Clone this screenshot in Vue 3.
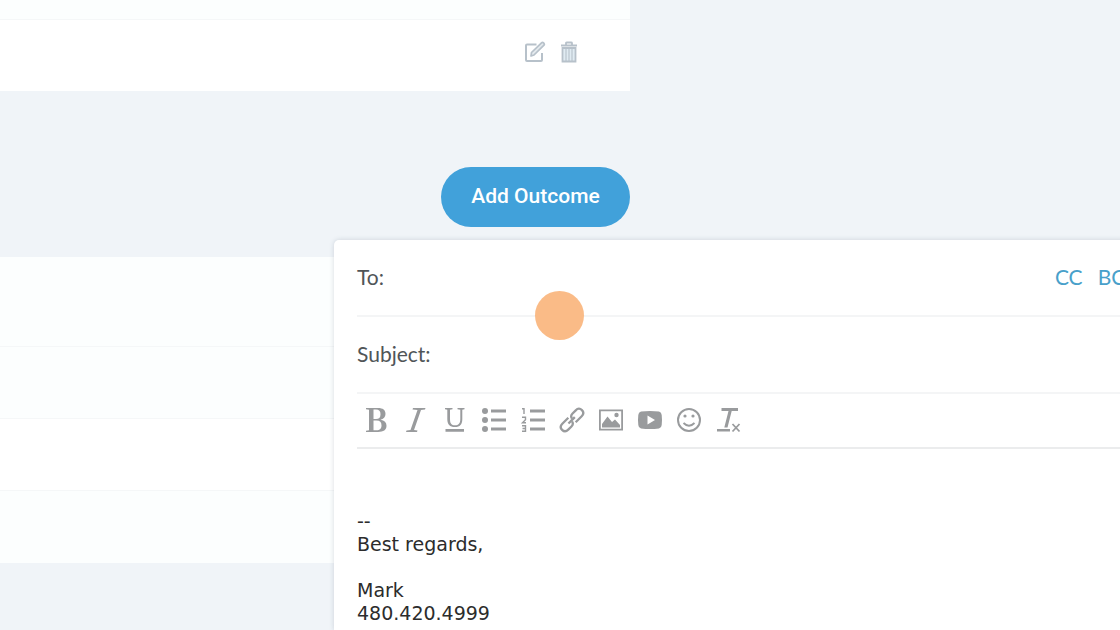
<script setup>
import { ref } from 'vue'

const to = ref('')
const subject = ref('')
const message = ref('--\nBest regards,\n\nMark\n480.420.4999')
const rows = ['tall', 'tinted', 'plain', 'tinted']
</script>

<template>
  <main class="page">
    <div class="column">
      <section class="card">
        <div class="row stub tinted"></div>
        <div class="row actions">
          <button class="icon-btn" type="button" aria-label="Edit">
            <svg width="22" height="22" viewBox="0 0 22 22" fill="none" stroke="#b7c1ca" stroke-width="2">
              <path d="M12.500 3.500H3Q2 3.500 2 4.500V19Q2 20 3 20H17Q18 20 18 19V12" />
              <path d="M7 15L7.500 11.500L17.500 1.800Q18.500 .9 19.700 2Q20.800 3.200 20 4.200L10 14Z" fill="#e3e9ed" stroke-width="1.700" stroke-linejoin="round" />
            </svg>
          </button>
          <button class="icon-btn" type="button" aria-label="Delete">
            <svg width="18" height="22" viewBox="0 0 18 22" fill="none" stroke="#b7c1ca">
              <path d="M1 4.500H17M6 4V2Q6 1.500 7 1.500H11Q12 1.500 12 2V4" stroke-width="1.800" />
              <path d="M2.500 7H15.500V20.500H2.500Z" fill="#e0ebf2" stroke-width="1.800" />
              <path d="M6 8V20M9 8V20M12 8V20" stroke-width="1.100" />
            </svg>
          </button>
        </div>
      </section>
      <button class="add" type="button">Add Outcome</button>
      <section class="card">
        <div v-for="(kind, i) in rows" :key="i" class="row" :class="kind"></div>
      </section>
    </div>

    <form class="composer" @submit.prevent>
      <div class="field">
        <label for="to">To:</label>
        <input id="to" v-model="to" type="text" />
        <a href="#">CC</a>
        <a href="#">BCC</a>
      </div>
      <div class="field">
        <label for="subject">Subject:</label>
        <input id="subject" v-model="subject" type="text" />
      </div>
      <div class="toolbar">
        <button type="button" aria-label="Bold">
          <svg viewBox="0 0 26 26"><path fill-rule="evenodd" d="M2 1H14C19 1 21.500 3 21.500 7C21.500 10 19.500 12 16.500 12.700C20.500 13.300 22.500 15.500 22.500 18.800C22.500 23 19.500 25 14 25H2V23.800L5 23.300V2.700L2 2.200ZM9.500 2.500V12H12C15 12 16.500 10.500 16.500 7.200C16.500 4 15 2.500 12 2.500ZM9.500 13.600V23.300H12.500C16 23.300 17.500 21.500 17.500 18.500C17.500 15.300 16 13.600 12.500 13.600Z" /></svg>
        </button>
        <button type="button" aria-label="Italic">
          <svg viewBox="0 0 26 26"><path d="M10 1H22.500L22 2.500L18 3L11 23L14.500 23.500L14 25H3L3.500 23.500L7.500 23L14.500 3L9.500 2.500Z" /></svg>
        </button>
        <button type="button" aria-label="Underline">
          <svg viewBox="0 0 26 26"><path d="M3 1H10.500V2.200L8 2.700V12C8 16.500 9.500 18.300 13 18.300C16.500 18.300 18.300 16.500 18.300 12V2.700L15.500 2.200V1H22.500V2.200L20.300 2.700V12C20.300 17.500 18 20 13 20C7.700 20 5.300 17.500 5.300 12V2.700L3 2.200ZM3.500 22H22V24.800H3.500Z" /></svg>
        </button>
        <button type="button" aria-label="Bulleted list">
          <svg viewBox="0 0 26 26"><circle cx="4" cy="4" r="3" /><circle cx="4" cy="13" r="3" /><circle cx="4" cy="22" r="3" /><path d="M10 2.500H25V5.500H10ZM10 11.500H25V14.500H10ZM10 20.500H25V23.500H10Z" /></svg>
        </button>
        <button type="button" aria-label="Numbered list">
          <svg viewBox="0 0 26 26"><path d="M10 2.500H25V5.500H10ZM10 11.500H25V14.500H10ZM10 20.500H25V23.500H10Z" /><path class="line" stroke-width="1.400" d="M2 1.700H4V7M2 10.200H5.500V12.800L2.500 15.700H6M2 18.700H5.500V24.300H2M2.500 21.500H5.500" /></svg>
        </button>
        <button type="button" aria-label="Link">
          <svg viewBox="0 0 26 26"><g class="line" stroke-width="2.300" transform="rotate(-45 13 13)"><path d="M12 8.800H3.500Q-1 8.800 -1 13T3.500 17.200H8Q11.500 17.200 12 14" /><path d="M14 17.200H22.500Q27 17.200 27 13T22.500 8.800H18Q14.500 8.800 14 12" /><path d="M8 13H17" /></g></svg>
        </button>
        <button type="button" aria-label="Image">
          <svg viewBox="0 0 26 26"><path class="line" stroke-width="1.800" d="M1.900 3.400H24.100V22.600H1.900Z" /><circle cx="18.500" cy="8" r="2.200" /><path d="M4 20.500V17L9.500 9.500L14 15L17 12.500L22 18V20.500Z" /></svg>
        </button>
        <button type="button" aria-label="Video">
          <svg viewBox="0 0 26 26"><path fill-rule="evenodd" d="M4 4.500Q13 3.500 22 4.500Q24.500 5 24.700 8Q25.300 13 24.700 18Q24.500 21 22 21.500Q13 22.500 4 21.500Q1.500 21 1.300 18Q.7 13 1.300 8Q1.500 5 4 4.500ZM10.500 8.500V17.500L18 13Z" /></svg>
        </button>
        <button type="button" aria-label="Emoji">
          <svg viewBox="0 0 26 26"><circle class="line" cx="13" cy="13" r="11" stroke-width="2" /><circle cx="9" cy="9" r="1.600" /><circle cx="17" cy="9" r="1.600" /><path class="line" stroke-width="1.800" d="M7.500 16Q13 21.500 18.500 16" /></svg>
        </button>
        <button type="button" aria-label="Clear formatting">
          <svg viewBox="0 0 26 26"><path d="M6.500 1H23V4H16.700L12.500 20.500H9.300L13.500 4H6.500ZM2 22H15V24.500H2Z" /><path class="line" stroke-width="1.800" d="M17.500 17L24.500 24.500M24.500 17L17.500 24.500" /></svg>
        </button>
      </div>
      <textarea v-model="message" aria-label="Message" spellcheck="false"></textarea>
    </form>

    <span class="pointer"></span>
  </main>
</template>

<style>
body {
  margin: 0;
}
</style>

<style scoped>
.page {
  position: relative;
  min-height: 100vh;
  overflow: hidden;
  background: #f0f4f8;
  font-family: Lato, "Liberation Sans", sans-serif;
  color: #505558;
}
* {
  box-sizing: border-box;
}
button {
  padding: 0;
  border: 0;
  background: none;
  cursor: pointer;
}
.column {
  display: flex;
  flex-direction: column;
  width: 56.25%;
}
.row {
  height: 72px;
  background: #fff;
  border-bottom: 1px solid #f5f7f8;
}
.row:last-child {
  border-bottom: 0;
}
.tinted,
.tall {
  background: #fcfefe;
}
.tall {
  height: 90px;
}
.stub {
  height: 20px;
}
.actions {
  display: flex;
  align-items: center;
  justify-content: flex-end;
  gap: 14px;
  height: 71px;
  padding: 0 52px 8px 0;
}
.icon-btn svg {
  display: block;
}
.add {
  align-self: flex-end;
  width: 189px;
  height: 60px;
  margin: 76px 0 30px;
  padding-bottom: 2px;
  border-radius: 30px;
  background: #41a1da;
  color: #fff;
  font: 500 21px Roboto, sans-serif;
}
.composer {
  position: absolute;
  top: 240px;
  bottom: 0;
  left: 334px;
  right: -42px;
  display: flex;
  flex-direction: column;
  padding: 0 23px;
  border-radius: 5px 5px 0 0;
  background: #fff;
  box-shadow: 0 0 5px rgba(60, 80, 100, 0.2);
}
.field {
  display: flex;
  align-items: center;
  gap: 15px;
  height: 77px;
  padding-bottom: 3px;
  border-bottom: 2px solid #f4f5f6;
  font-size: 21px;
}
.field input {
  flex: 1;
  min-width: 0;
  border: 0;
  outline: 0;
  background: none;
  font: inherit;
}
.field a {
  color: #48a0ca;
  text-decoration: none;
}
.toolbar {
  display: flex;
  align-items: center;
  gap: 13px;
  height: 55px;
  padding: 0 0 2px 7px;
  border-bottom: 2px solid #ebeced;
}
.toolbar svg {
  display: block;
  width: 26px;
  height: 26px;
  fill: #999b9d;
}
.toolbar .line {
  fill: none;
  stroke: #999b9d;
}
textarea {
  flex: 1;
  min-height: 180px;
  padding: 61px 0 0;
  border: 0;
  outline: 0;
  resize: none;
  overflow: hidden;
  background: none;
  color: #2c2c2c;
  font: 19px/23px "DejaVu Sans", sans-serif;
}
.pointer {
  position: absolute;
  top: 291px;
  left: 535px;
  width: 49px;
  height: 49px;
  border-radius: 50%;
  background: #fab57d;
  opacity: 0.92;
}
</style>
